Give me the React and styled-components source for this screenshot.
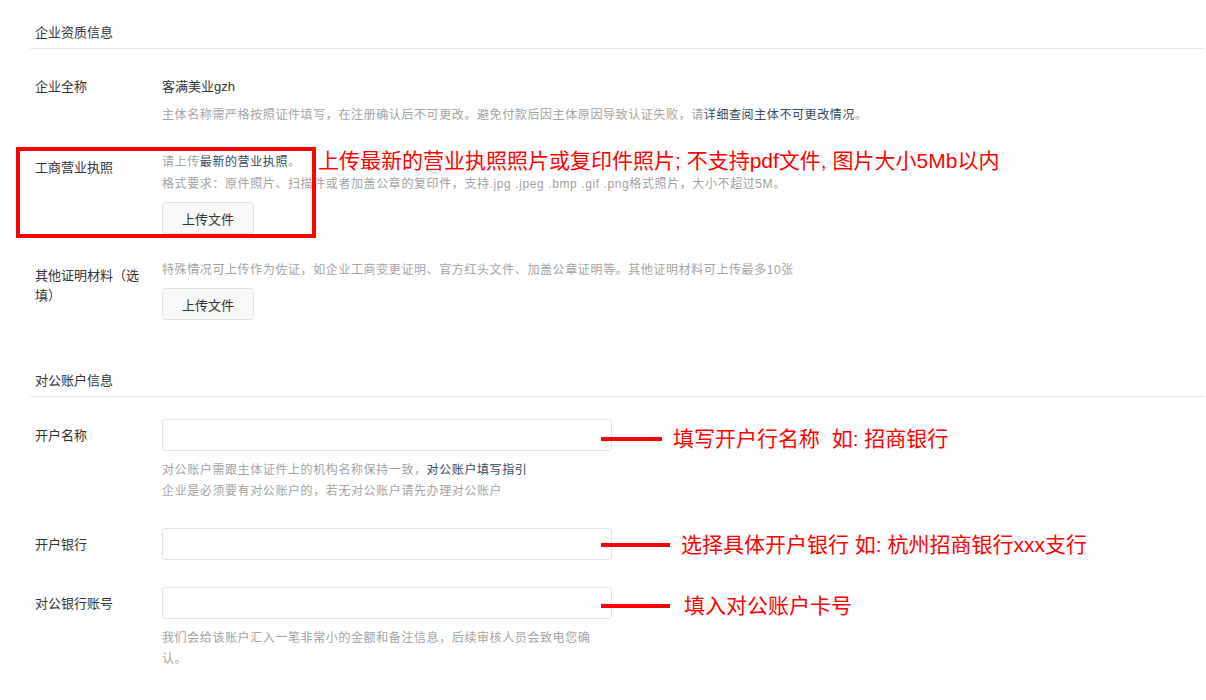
import React from 'react';
import styled, { createGlobalStyle } from 'styled-components';

const GlobalStyle = createGlobalStyle`
  html, body {
    margin: 0;
    padding: 0;
    background: #fff;
  }
  body {
    font-family: "Liberation Sans", "Noto Sans CJK SC", sans-serif;
    color: #333;
  }
`;

const Page = styled.div`
  padding: 23px 1px 0 30px;
`;

const SectionTitle = styled.div`
  font-size: 13px;
  line-height: 20px;
  padding: 0 0 5px 5px;
  border-bottom: 1px solid #e6eaee;
  color: #333;
  margin-top: ${p => p.gap || 0}px;
  margin-bottom: ${p => p.below || 21}px;
`;

const Row = styled.div`
  position: relative;
  display: flex;
  padding-left: 5px;
  margin-bottom: ${p => (p.gap === undefined ? 25 : p.gap)}px;
`;

const Label = styled.div`
  width: 112px;
  flex-shrink: 0;
  padding: 7px 15px 0 0;
  font-size: 13px;
  line-height: 20px;
  color: #333;
`;

const Content = styled.div`
  width: 450px;
`;

const Value = styled.div`
  font-size: 13px;
  line-height: 34px;
  color: #333;
`;

const Hint = styled.div`
  max-width: 440px;
  font-size: 12px;
  letter-spacing: 0.6px;
  line-height: ${p => p.lh || 21}px;
  color: #a3a3a3;
  margin-top: ${p => p.top || 0}px;
  white-space: ${p => (p.nowrap ? 'nowrap' : 'normal')};
`;

const Link = styled.span`
  color: #34495e;
`;

const UploadButton = styled.button`
  display: block;
  width: 92px;
  height: 32px;
  margin-top: 7px;
  background: #f8f8f8;
  border: 1px solid #e2e2e2;
  border-radius: 3px;
  font-family: inherit;
  font-size: 13px;
  color: #333;
  cursor: pointer;
`;

const Field = styled.div`
  position: relative;
`;

const Input = styled.input`
  display: block;
  box-sizing: border-box;
  width: 450px;
  height: 32px;
  border: 1px solid #e1e4e8;
  border-radius: 3px;
  outline: none;
  background: #fff;
`;

/* red annotation overlays */
const RedBox = styled.div`
  position: absolute;
  left: -14px;
  top: -4px;
  width: 292px;
  height: 83px;
  border: 4px solid #ff0000;
  pointer-events: none;
`;

const RedNote = styled.div`
  position: absolute;
  left: ${p => p.left}px;
  top: ${p => p.top}px;
  font-size: 21px;
  line-height: 24px;
  color: #ff0000;
  white-space: nowrap;
`;

const Pointer = styled.div`
  position: absolute;
  left: 439px;
  top: ${p => p.top}px;
  display: flex;
  align-items: center;
  gap: ${p => p.gap}px;
  white-space: nowrap;
`;

const PointerLine = styled.span`
  display: block;
  width: ${p => p.w}px;
  height: 4px;
  background: #ff0000;
`;

const PointerText = styled.span`
  font-size: 21px;
  line-height: 24px;
  color: #ff0000;
`;

function Annotated({ line, gap, top, children }) {
  return (
    <Pointer gap={gap} top={top}>
      <PointerLine w={line} />
      <PointerText>{children}</PointerText>
    </Pointer>
  );
}

export default function App() {
  return (
    <Page>
      <GlobalStyle />
      <SectionTitle>企业资质信息</SectionTitle>

      <Row>
        <Label>企业全称</Label>
        <Content>
          <Value>客满美业gzh</Value>
          <Hint nowrap top={1}>
            主体名称需严格按照证件填写，在注册确认后不可更改。避免付款后因主体原因导致认证失败，请<Link>详细查阅主体不可更改情况</Link>。
          </Hint>
        </Content>
      </Row>

      <Row>
        <RedBox />
        <RedNote left={288} top={-2}>上传最新的营业执照照片或复印件照片; 不支持pdf文件, 图片大小5Mb以内</RedNote>
        <Label>工商营业执照</Label>
        <Content>
          <Hint lh={22}>请上传<Link>最新的营业执照</Link>。</Hint>
          <Hint nowrap lh={22}>格式要求：原件照片、扫描件或者加盖公章的复印件，支持.jpg .jpeg .bmp .gif .png格式照片，大小不超过5M。</Hint>
          <UploadButton>上传文件</UploadButton>
        </Content>
      </Row>

      <Row gap={51}>
        <Label>其他证明材料（选填）</Label>
        <Content>
          <Hint nowrap lh={22}>特殊情况可上传作为佐证，如企业工商变更证明、官方红头文件、加盖公章证明等。其他证明材料可上传最多10张</Hint>
          <UploadButton>上传文件</UploadButton>
        </Content>
      </Row>

      <SectionTitle below={22}>对公账户信息</SectionTitle>

      <Row gap={26}>
        <Label>开户名称</Label>
        <Content>
          <Field>
            <Input />
            <Annotated line={61} gap={11} top={8}>填写开户行名称&nbsp;&nbsp;如: 招商银行</Annotated>
          </Field>
          <Hint top={9}>
            对公账户需跟主体证件上的机构名称保持一致，<Link>对公账户填写指引</Link>
          </Hint>
          <Hint>企业是必须要有对公账户的，若无对公账户请先办理对公账户</Hint>
        </Content>
      </Row>

      <Row gap={27}>
        <Label>开户银行</Label>
        <Content>
          <Field>
            <Input />
            <Annotated line={69} gap={11} top={5}>选择具体开户银行 如: 杭州招商银行xxx支行</Annotated>
          </Field>
        </Content>
      </Row>

      <Row gap={0}>
        <Label>对公银行账号</Label>
        <Content>
          <Field>
            <Input />
            <Annotated line={69} gap={14} top={7}>填入对公账户卡号</Annotated>
          </Field>
          <Hint top={9}>我们会给该账户汇入一笔非常小的金额和备注信息，后续审核人员会致电您确认。</Hint>
        </Content>
      </Row>
    </Page>
  );
}
